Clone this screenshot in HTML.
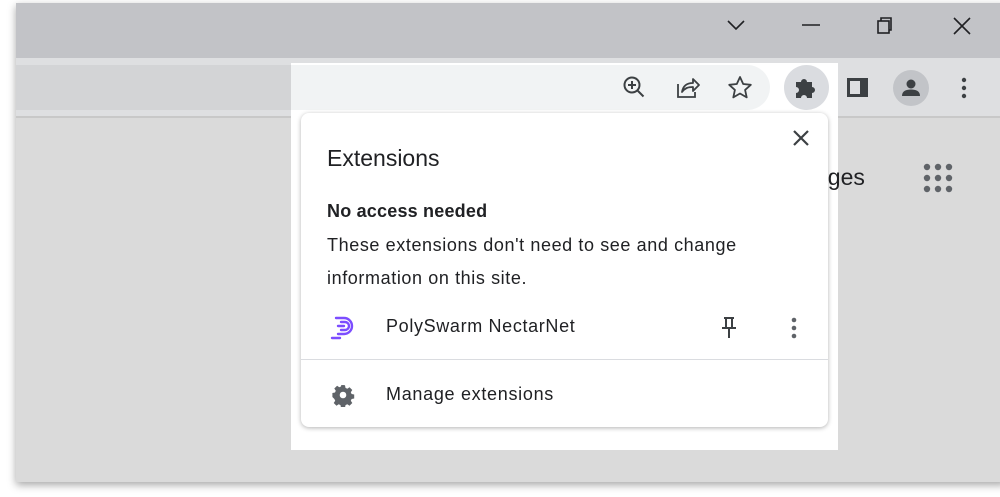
<!DOCTYPE html>
<html><head><style>
*{margin:0;padding:0;box-sizing:border-box}
body{width:1000px;height:497px;background:#fff;position:relative;overflow:hidden;font-family:"Liberation Sans",sans-serif;color:#202124}
.win{position:absolute;left:16px;top:3px;width:990px;height:479px;background:#dadada;box-shadow:0 3px 8px rgba(0,0,0,.35)}
.title{position:absolute;left:16px;top:3px;width:984px;height:55px;background:#c2c3c7}
.tool{position:absolute;left:16px;top:58px;width:984px;height:60px;background:#dedfe1;border-bottom:2px solid #c8c8c8}
.addrL{position:absolute;left:16px;top:65px;width:275px;height:45px;background:#d3d4d6}
.shot{position:absolute;left:291px;top:63px;width:547px;height:387px;background:#fff}
.addr{position:absolute;left:291px;top:65px;width:479px;height:45px;background:#f1f3f4;border-radius:0 23px 23px 0}
.pop{position:absolute;left:301px;top:113px;width:527px;height:314px;background:#fff;border-radius:8px;box-shadow:0 1px 5px rgba(0,0,0,.3)}
.t{position:absolute;white-space:nowrap}
svg{position:absolute}
</style></head><body>
<div class="win"></div>
<div class="title"></div>
<div class="tool"></div>
<div class="addrL"></div>
<div class="shot"></div>
<div class="addr"></div>
<svg style="left:726px;top:18px" width="20" height="14"><path d="M2 3l8 8 8-8" stroke="#202124" stroke-width="1.6" fill="none"/></svg>
<svg style="left:801px;top:18px" width="20" height="14"><path d="M1 7h18" stroke="#202124" stroke-width="1.6"/></svg>
<svg style="left:876px;top:16px" width="20" height="20"><rect x="2" y="5" width="11" height="12" stroke="#202124" stroke-width="1.6" fill="none"/><path d="M5 5V2h10v12h-2" stroke="#202124" stroke-width="1.6" fill="none"/></svg>
<svg style="left:952px;top:16px" width="20" height="20"><path d="M2 2l16 16M18 2L2 18" stroke="#202124" stroke-width="1.6"/></svg>
<svg style="left:622px;top:75px" width="26" height="26"><circle cx="10" cy="10" r="7.5" stroke="#3c4043" stroke-width="2" fill="none"/><path d="M15.5 15.5l6 6M10 6v8M6 10h8" stroke="#3c4043" stroke-width="2"/></svg>
<svg style="left:675px;top:75px" width="26" height="26"><path d="M3 9v13h17v-5" stroke="#3c4043" stroke-width="1.8" fill="none"/><path d="M7 17c1-6 5-9 11-9V4l6 6-6 6v-4c-5 0-8 1-11 5z" stroke="#3c4043" stroke-width="1.8" fill="none" stroke-linejoin="round"/></svg>
<svg style="left:727px;top:75px" width="26" height="26"><path d="M13 2l3.2 7 7.6.8-5.7 5.1 1.6 7.5L13 18.5l-6.7 3.9 1.6-7.5L2.2 9.8 9.8 9z" stroke="#3c4043" stroke-width="1.8" fill="none" stroke-linejoin="round"/></svg>
<div style="position:absolute;left:784px;top:65px;width:45px;height:45px;border-radius:50%;background:#dadce0"></div>
<svg style="left:793px;top:75px" width="26" height="26"><path d="M3 7h5a3 3 0 016 0h5v5a3 3 0 010 6v5h-5a3 3 0 00-6 0H3v-5a3 3 0 000-6z" fill="#3c4043"/></svg>
<svg style="left:845px;top:76px" width="26" height="24"><rect x="2" y="2" width="21" height="19" fill="#3c4043"/><rect x="5" y="5" width="10" height="13" fill="#dedfe1"/></svg>
<div style="position:absolute;left:893px;top:70px;width:36px;height:36px;border-radius:50%;background:#c2c4c8"></div>
<svg style="left:899px;top:76px" width="24" height="24"><circle cx="12" cy="8" r="4.5" fill="#3c4043"/><path d="M3 20c0-5 4-6.5 9-6.5s9 1.5 9 6.5z" fill="#3c4043"/></svg>
<svg style="left:958px;top:76px" width="12" height="24"><circle cx="6" cy="4" r="2.2" fill="#3c4043"/><circle cx="6" cy="12" r="2.2" fill="#3c4043"/><circle cx="6" cy="20" r="2.2" fill="#3c4043"/></svg>
<div class="t" style="left:815px;top:164px;font-size:23px;color:#202124">ages</div>
<svg style="left:922px;top:162px" width="34" height="32"><g fill="#5f6368"><circle cx="5" cy="5" r="3.2"/><circle cx="16" cy="5" r="3.2"/><circle cx="27" cy="5" r="3.2"/><circle cx="5" cy="16" r="3.2"/><circle cx="16" cy="16" r="3.2"/><circle cx="27" cy="16" r="3.2"/><circle cx="5" cy="27" r="3.2"/><circle cx="16" cy="27" r="3.2"/><circle cx="27" cy="27" r="3.2"/></g></svg>
<div class="pop">
<svg style="left:491px;top:16px" width="18" height="18"><path d="M2 2l14 14M16 2L2 16" stroke="#3c4043" stroke-width="2.2"/></svg>
<div class="t" style="left:26px;top:32px;font-size:23px">Extensions</div>
<div class="t" style="left:26px;top:88px;font-size:18px;font-weight:bold;letter-spacing:0.2px">No access needed</div>
<div class="t" style="left:26px;top:116px;font-size:18px;line-height:33px;letter-spacing:0.6px">These extensions don't need to see and change<br>information on this site.</div>
<svg style="left:28px;top:200px" width="28" height="28"><g stroke="#7c4dff" stroke-width="2.4" fill="none" stroke-linecap="round"><path d="M7 5h8a8 8 0 010 16h-6"/><path d="M3 25h8"/><path d="M9 13h6"/><path d="M12 9h4a4 4 0 010 8h-4"/></g></svg>
<div class="t" style="left:85px;top:203px;font-size:18px;letter-spacing:0.65px">PolySwarm NectarNet</div>
<svg style="left:418px;top:203px" width="20" height="24"><path d="M5 2h10M7 2v9M13 2v9M3 12h14M10 12v10" stroke="#3c4043" stroke-width="2" fill="none"/></svg>
<svg style="left:487px;top:203px" width="12" height="24"><circle cx="6" cy="4" r="2.3" fill="#5f6368"/><circle cx="6" cy="12" r="2.3" fill="#5f6368"/><circle cx="6" cy="20" r="2.3" fill="#5f6368"/></svg>
<div style="position:absolute;left:0;top:246px;width:527px;height:1px;background:#dadce0"></div>
<svg style="left:30px;top:270px" width="24" height="24"><path d="M12 2l2 .3.5 2.6 1.8.8 2.2-1.5 2.8 2.8-1.5 2.2.8 1.8 2.6.5v4l-2.6.5-.8 1.8 1.5 2.2-2.8 2.8-2.2-1.5-1.8.8-.5 2.6h-4l-.5-2.6-1.8-.8-2.2 1.5-2.8-2.8 1.5-2.2-.8-1.8L1.4 14v-4l2.6-.5.8-1.8-1.5-2.2 2.8-2.8 2.2 1.5 1.8-.8L10 2.3z" fill="#5f6368"/><circle cx="12" cy="12" r="3.3" fill="#fff"/></svg>
<div class="t" style="left:85px;top:271px;font-size:18px;letter-spacing:0.7px">Manage extensions</div>
</div>
</body></html>
